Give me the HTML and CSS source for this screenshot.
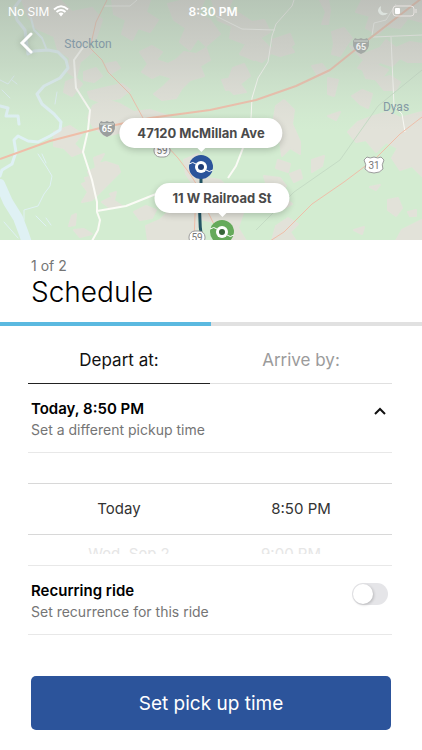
FILE: index.html
```html
<!DOCTYPE html>
<html lang="en">
<head>
    <meta charset="UTF-8">
    <meta name="viewport" content="width=device-width, initial-scale=1.0">
    <title>Schedule</title>
    <link rel="stylesheet" href="styles.css">
</head>
<body>

<!-- Map header -->
<header class="map">
    <svg class="map-art" viewBox="0 0 422 240" preserveAspectRatio="xMidYMin slice" aria-hidden="true">
        <defs>
            <linearGradient id="shade" x1="0" y1="0" x2="0" y2="1">
                <stop offset="0" stop-color="#9a9f9c" stop-opacity=".5"/>
                <stop offset=".5" stop-color="#a8aeaa" stop-opacity=".3"/>
                <stop offset="1" stop-color="#c0c8c2" stop-opacity="0"/>
            </linearGradient>
        </defs>
        <rect width="422" height="241" fill="#d3ecd1"/>
        <!-- open land -->
        <g fill="#e5e1db" stroke="#e5e1db" stroke-width="2" stroke-linejoin="round" opacity=".85">
            <path d="M22 0 60 0 72 12 92 8 102 20 96 38 85 44 92 52 80 62 76 78 68 72 70 58 58 50 54 36 36 28 28 16Z"/>
            <path d="M112 0 150 0 146 12 158 20 150 32 138 28 132 40 122 34 126 20 114 14Z"/>
            <path d="M168 4 184 0 204 0 198 14 210 20 220 34 206 46 198 38 190 50 180 42 186 28 174 20Z"/>
            <path d="M212 0 232 0 228 10 240 14 252 22 264 20 270 32 260 38 270 48 290 46 294 52 280 56 268 52 254 60 240 54 246 44 230 38 232 26 218 20Z"/>
            <path d="M140 52 152 46 162 52 156 60 168 64 176 60 184 52 196 54 206 48 210 60 200 66 204 76 190 80 182 88 176 98 162 100 154 94 164 86 172 78 160 74 152 78 142 72 148 64Z"/>
            <path d="M84 72 96 68 102 76 94 82 84 80ZM88 92 104 88 122 84 130 90 120 98 100 102 90 98ZM106 64 116 62 120 68 110 74ZM66 82 76 78 82 84 72 96 64 92Z"/>
            <path d="M93 106 106 100 120 104 134 112 150 110 168 116 180 124 168 134 154 132 140 130 122 132 106 136 94 128 88 118Z"/>
            <path d="M54 132 70 126 82 134 74 144 82 152 72 156 64 148 54 146Z"/>
            <path d="M94 158 104 154 98 164 106 162 118 166 120 172 112 180 104 188 92 200 82 202 88 192 82 184 92 180 88 172 96 168Z"/>
            <path d="M85 178 94 176 96 184 88 186ZM110 194 116 192 114 200ZM72 216 76 214 75 225 69 226ZM74 230 84 229 92 234 80 237ZM134 212 146 206 156 210 152 218 140 220ZM102 202 110 198 122 206 110 208Z"/>
            <path d="M146 226 160 220 170 210 180 214 194 212 198 226 192 241 148 241Z"/>
            <path d="M184 160 198 154 204 166 208 178 220 180 232 192 244 210 238 228 246 241 232 241 214 222 196 218 188 200 194 186 186 174Z"/>
            <path d="M233 68 244 64 250 76 240 84 246 92 234 94 226 86ZM250 48 262 44 270 54 262 62 252 58ZM272 40 290 34 294 44 284 52 274 50ZM222 80 232 78 238 88 226 90Z"/>
            <path d="M332 32 344 28 352 38 346 46 340 56 332 54 334 44ZM350 46 364 54 380 48 386 40 396 48 410 42 422 44 422 62 408 62 400 58 392 66 380 62 370 72 358 68 364 60ZM312 66 322 64 328 72 318 76ZM362 68 374 64 388 70 380 80 366 78Z"/>
            <path d="M362 0 422 0 422 22 408 18 400 28 386 26 378 34 366 28 370 16 356 12ZM320 0 326 12 322 24 328 24 330 10 328 0Z"/>
            <path d="M276 106 284 100 294 110 292 124 300 142 300 154 290 148 282 156 280 140 272 130Z"/>
            <path d="M328 78 338 80 334 96 328 94ZM328 116 340 112 336 120ZM352 96 362 90 372 94 368 108 360 104ZM376 80 390 76 400 82 396 90 384 90Z"/>
            <path d="M348 132 358 122 374 116 388 112 400 118 422 112 422 176 412 166 400 170 392 158 398 148 386 142 376 152 366 140 356 142Z"/>
            <path d="M278 160 290 164 288 172 276 168ZM312 160 324 156 322 166 312 172ZM290 174 300 170 302 178 294 182ZM264 176 280 178 286 186 278 192 292 204 284 208 272 202Z"/>
            <path d="M388 200 398 198 402 208 396 216 388 210ZM408 212 416 210 416 216 410 216ZM370 187 380 185 376 190ZM402 230 422 220 422 241 396 241ZM276 226 288 218 298 224 290 232 296 241 272 241ZM354 230 364 227 362 234Z"/>
        </g>
        <!-- water -->
        <g fill="none" stroke="#dff1f4" stroke-linecap="round" stroke-linejoin="round">
            <path stroke-width="3" d="M20 0 14 8 17 20 25 30 28 54 34 51 48 50 58 52 66 60 68 68 60 78 44 86 37 94 42 104 54 114 61 122 60 130 50 136 38 142 28 141 18 136 14 140 16 152 12 164 2 170 0 176"/>
            <path stroke-width="2" d="M31 18 34 30 42 38 46 48"/>
            <path stroke-width="10" d="M0 184 8 202 18 218 24 234 27 243"/>
            <path stroke-width="1" d="M0 80 8 84 14 76M2 90 10 98M12 80 17 84M57 92 55 104M38 154 46 166 52 176 50 186 44 194 38 206 24 210 24 220M42 154 46 163M4 222 18 238M36 216 46 226M46 218 51 225"/>
            <path stroke-width="3" d="M0 106 8 108 6 116 18 116 19 124"/>
        </g>
        <!-- local roads -->
        <g fill="none" stroke="#fbfbf6" stroke-width="1" stroke-linejoin="round">
            <path d="M104 6 130 6 137 0M294 0 292 6 276 24 272 36 268 62 258 78 252 98 251 118M216 16 242 29 275 30M422 35 373 37M391 37 394 106 402 114 405 132M372 35 374 23 386 20 396 4"/>
            <path stroke-width="2" d="M243 148 236 166 228 178M84 46 74 60 76 88 90 110 88 130 83 152 92 180 97 202 97 212 100 220 98 230 92 241M97 211 126 206 156 194"/>
        </g>
        <path d="M422 70 378 106 340 160 294 192 256 230" fill="none" stroke="#c5dcc5" stroke-width="1"/>
        <!-- highways -->
        <g fill="none" stroke="#efbea9" stroke-linejoin="round">
            <path stroke-width="2" d="M0 159 50 141 100 128 150 118 210 110 256 100 296 86 330 70 360 46 422 -2"/>
            <path stroke-width="1" d="M108 -2 96 22 90 48 102 60 108 72 130 94 143 118 156 134 178 158 190 174 200 190M422 117 400 134 376 158 344 182 312 204 284 232 270 241M196 190 194 241M208 212 222 241"/>
        </g>
        <rect width="422" height="130" fill="url(#shade)"/>
        <!-- place names -->
        <g font-family="Roboto, 'Liberation Sans', sans-serif" font-size="12" fill="#8499a5">
            <text x="88" y="48" text-anchor="middle">Stockton</text>
            <text x="396" y="111" text-anchor="middle">Dyas</text>
        </g>
        <!-- road shields -->
        <g font-family="Roboto, 'Liberation Sans', sans-serif" font-size="9" text-anchor="middle">
            <path d="M101 121Q104 123 107 121Q110 123 113 121L115 124Q116 134 107 137Q98 134 99 124Z" fill="#9b9f9e"/>
            <path d="M100 124H114" stroke="#dce2db"/>
            <text x="107" y="132" font-weight="700" fill="#fff">65</text>
            <path d="M355 38Q358 40 361 38Q364 40 367 38L369 41Q370 51 361 54Q352 51 353 41Z" fill="#a3a8a5"/>
            <path d="M354 41H368" stroke="#cfd5cf"/>
            <text x="361" y="50" font-weight="700" fill="#eee">65</text>
            <rect x="154" y="144" width="16" height="13" rx="6" fill="#fff" stroke="#9c9c9c"/>
            <text x="162" y="154" font-size="10" fill="#777">59</text>
            <path d="M367 157Q370 159 374 157Q378 159 381 157L384 160Q381 165 383 169Q380 173 374 173Q368 173 365 169Q367 165 364 160Z" fill="#fff" stroke="#9c9c9c"/>
            <text x="374" y="169" font-size="10" fill="#777">31</text>
        </g>
        <!-- route and stops -->
        <path d="M201 178V194Q198 216 202 241" fill="none" stroke="#245666" stroke-width="3"/>
        <rect x="189" y="231" width="16" height="13" rx="6" fill="#fff" stroke="#9c9c9c"/>
        <text x="197" y="241" font-family="Roboto, sans-serif" font-size="10" text-anchor="middle" fill="#777">59</text>
        <g id="pickup-pin">
            <circle cx="201" cy="167" r="12" fill="#2c549b"/>
            <path d="M189 164Q193 161 196 164M206 170Q209 173 213 170" fill="none" stroke="#fff"/>
            <circle cx="201" cy="167" r="6" fill="#fff"/>
            <circle cx="201" cy="167" r="3" fill="#1f3c74"/>
        </g>
        <g id="dropoff-pin">
            <circle cx="222" cy="232" r="12" fill="#65aa5b"/>
            <path d="M210 229Q214 226 217 229M227 235Q230 238 234 235" fill="none" stroke="#fff"/>
            <circle cx="222" cy="232" r="6" fill="#fff"/>
            <circle cx="222" cy="232" r="3" fill="#38663a"/>
        </g>
    </svg>

    <div class="status-bar">
        <div class="status-side">
            <span>No SIM</span>
            <svg width="16" height="12" viewBox="0 0 16 12" fill="none" stroke="#fff" stroke-width="2">
                <path d="M1 4.500Q8 -2 15 4.500M3.500 7Q8 3 12.500 7"/>
                <path d="M5.500 8.500Q8 6.500 10.500 8.500L8 11.500Z" fill="#fff" stroke="none"/>
            </svg>
        </div>
        <span class="clock">8:30 PM</span>
        <div class="status-side status-right">
            <svg width="10" height="10" viewBox="0 0 10 10"><path d="M3 0Q1 8 10 7Q7 10 3.500 9Q0 7.500 0 4Q.5 1.500 3 0Z" fill="#dce2dd"/></svg>
            <svg width="26" height="12" viewBox="0 0 26 12">
                <rect x="1" y="1" width="21" height="10" rx="3" fill="none" stroke="#e8e3e1"/>
                <rect x="3" y="3" width="5" height="6" rx="1" fill="#fff"/>
                <path d="M24 4V8" stroke="#e8e3e1"/>
            </svg>
        </div>
    </div>

    <button class="back-btn" type="button" aria-label="Back">
        <svg width="14" height="22" viewBox="0 0 14 22" fill="none" stroke="#fff" stroke-width="3" stroke-linecap="round"><path d="M12 2 3 11 12 20"/></svg>
    </button>

    <div class="callout pickup">47120 McMillan Ave</div>
    <div class="callout dropoff">11 W Railroad St</div>
</header>

<!-- Schedule form -->
<main class="sheet">
    <div class="heading">
        <p class="step">1 of 2</p>
        <h1>Schedule</h1>
    </div>
    <div class="progress"><div class="progress-fill"></div></div>

    <div class="form">
        <div class="tabs" role="tablist">
            <button class="tab active" type="button" role="tab" aria-selected="true">Depart at:</button>
            <button class="tab" type="button" role="tab" aria-selected="false">Arrive by:</button>
        </div>

        <button class="row" type="button" aria-expanded="true">
            <span class="row-text">
                <span class="row-title">Today, 8:50 PM</span>
                <span class="row-note">Set a different pickup time</span>
            </span>
            <svg class="chevron" width="12" height="8" viewBox="0 0 12 8" fill="none" stroke="#111" stroke-width="2"><path d="M1 7 6 2 11 7"/></svg>
        </button>

        <div class="picker">
            <div class="picker-current">
                <span>Today</span>
                <span>8:50 PM</span>
            </div>
            <div class="picker-next">
                <span>Wed, Sep 2</span>
                <span>9:00 PM</span>
            </div>
        </div>

        <div class="row">
            <label class="row-text" for="recurring">
                <span class="row-title">Recurring ride</span>
                <span class="row-note">Set recurrence for this ride</span>
            </label>
            <input class="switch" type="checkbox" id="recurring">
        </div>
    </div>

    <button class="submit-btn" type="button">Set pick up time</button>
</main>

</body>
</html>
```
FILE: styles.css
```css
* {
    box-sizing: border-box;
}
body {
    margin: 0;
    font-family: Inter, "Liberation Sans", sans-serif;
    background-color: #fff;
    color: #000;
}
button {
    font-family: inherit;
    background: none;
    border: none;
    padding: 0;
    cursor: pointer;
}

/* Map */
.map {
    position: relative;
    height: 240px;
    overflow: hidden;
}
.map-art {
    position: absolute;
    top: 0;
    left: 0;
    width: 100%;
    height: 100%;
}
.status-bar {
    position: relative;
    display: flex;
    align-items: center;
    height: 22px;
    padding: 0 4px 0 8px;
    color: #fff;
    font-size: 12px;
}
.status-side {
    flex: 1;
    display: flex;
    align-items: center;
    gap: 4px;
}
.status-right {
    justify-content: flex-end;
}
.clock {
    font-weight: 600;
}
.back-btn {
    position: relative;
    display: block;
    margin: 10px 0 0 19px;
    height: 22px;
}
.back-btn svg {
    display: block;
    filter: drop-shadow(0 0 3px rgba(0, 0, 0, 0.2));
}

/* Address bubbles over the map */
.callout {
    position: absolute;
    padding: 0 18px;
    border-radius: 15px;
    background-color: #fff;
    color: #4a4a4a;
    font-size: 13px;
    font-weight: 700;
    line-height: 30px;
    white-space: nowrap;
    transform: translateX(-50%);
    box-shadow: 0 2px 7px rgba(0, 0, 0, 0.2);
}
.callout::after {
    content: "";
    position: absolute;
    top: 100%;
    left: 50%;
    margin-left: -4px;
    border: 4px solid transparent;
    border-top-color: #fff;
}
.pickup {
    top: 118px;
    left: calc(50% - 10px);
}
.dropoff {
    top: 183px;
    left: calc(50% + 11px);
}

/* Heading */
.heading {
    padding: 16px 31px 13px;
}
.step {
    margin: 0;
    color: #757575;
    font-size: 14px;
    line-height: 20px;
}
h1 {
    margin: 0;
    font-size: 28px;
    font-weight: 300;
    line-height: 33px;
}
.progress {
    height: 4px;
    background-color: #e1e1e1;
}
.progress-fill {
    width: 50%;
    height: 100%;
    background-color: #5bb9e0;
}

/* Form */
.form {
    padding: 10px 30px 0 28px;
}
.tabs {
    display: flex;
}
.tab {
    flex: 1;
    height: 48px;
    border-bottom: 1px solid #e0e0e0;
    color: #9b9b9b;
    font-size: 17px;
}
.tab.active {
    border-bottom-color: #222;
    color: #111;
}
.row {
    display: flex;
    justify-content: space-between;
    width: 100%;
    height: 69px;
    padding: 14px 3px 0;
    border-bottom: 1px solid #e8e8e8;
    text-align: left;
}
.row-title,
.row-note {
    display: block;
    line-height: 21px;
}
.row-title {
    color: #000;
    font-size: 15px;
    font-weight: 600;
}
.row-note {
    color: #757575;
    font-size: 14px;
}
.chevron {
    margin: 9px 3px 0 0;
}

/* Time picker */
.picker {
    padding-top: 30px;
    border-bottom: 1px solid #e8e8e8;
    text-align: center;
}
.picker span {
    flex: 1;
}
.picker-current {
    display: flex;
    border-top: 1px solid #d8d8d8;
    border-bottom: 1px solid #d8d8d8;
    color: #333;
    font-size: 15px;
    line-height: 50px;
}
.picker-next {
    display: flex;
    height: 19px;
    margin-bottom: 11px;
    padding: 8px 20px 0;
    overflow: hidden;
    color: #e6e6e6;
    font-size: 15px;
    line-height: 21px;
}

/* Switch */
.switch {
    appearance: none;
    width: 36px;
    height: 22px;
    margin: 3px 1px 0 0;
    padding: 1px;
    border-radius: 11px;
    background-color: #e5e5e8;
    cursor: pointer;
}
.switch::before {
    content: "";
    display: block;
    width: 20px;
    height: 20px;
    border-radius: 50%;
    background-color: #fff;
    box-shadow: 1px 1px 3px rgba(0, 0, 0, 0.2);
}
.switch:checked {
    background-color: #2c549b;
}
.switch:checked::before {
    margin-left: 14px;
}

.submit-btn {
    display: block;
    width: calc(100% - 62px);
    height: 54px;
    margin: 41px 31px 21px;
    border-radius: 5px;
    background-color: #2c549b;
    color: #fff;
    font-size: 19px;
}
```
